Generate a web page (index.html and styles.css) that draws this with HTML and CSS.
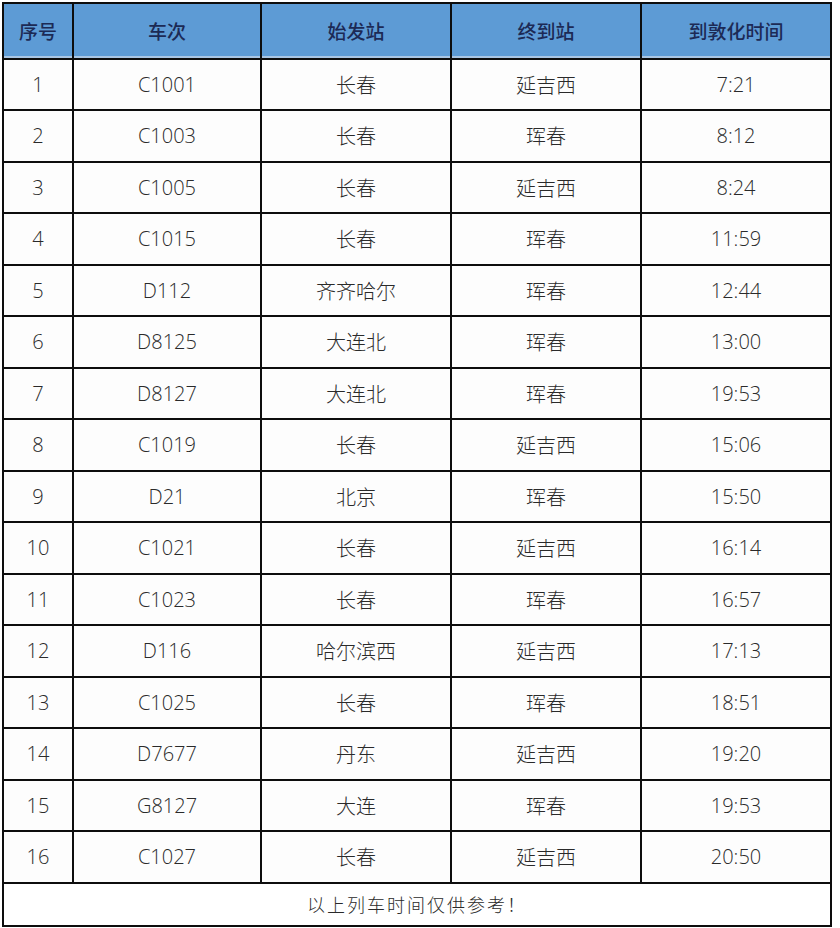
FILE: index.html
```html
<!DOCTYPE html>
<html lang="zh-CN">
<head>
<meta charset="utf-8">
<title>列车时刻表</title>
<link rel="stylesheet" href="styles.css">
</head>
<body>
<div class="page">
<table class="timetable">
  <colgroup>
    <col class="c-no">
    <col class="c-train">
    <col class="c-from">
    <col class="c-to">
    <col class="c-time">
  </colgroup>
  <thead>
    <tr><th>序号</th><th>车次</th><th>始发站</th><th>终到站</th><th>到敦化时间</th></tr>
  </thead>
  <tbody>
    <tr><td>1</td><td>C1001</td><td>长春</td><td>延吉西</td><td>7:21</td></tr>
    <tr><td>2</td><td>C1003</td><td>长春</td><td>珲春</td><td>8:12</td></tr>
    <tr><td>3</td><td>C1005</td><td>长春</td><td>延吉西</td><td>8:24</td></tr>
    <tr><td>4</td><td>C1015</td><td>长春</td><td>珲春</td><td>11:59</td></tr>
    <tr><td>5</td><td>D112</td><td>齐齐哈尔</td><td>珲春</td><td>12:44</td></tr>
    <tr><td>6</td><td>D8125</td><td>大连北</td><td>珲春</td><td>13:00</td></tr>
    <tr><td>7</td><td>D8127</td><td>大连北</td><td>珲春</td><td>19:53</td></tr>
    <tr><td>8</td><td>C1019</td><td>长春</td><td>延吉西</td><td>15:06</td></tr>
    <tr><td>9</td><td>D21</td><td>北京</td><td>珲春</td><td>15:50</td></tr>
    <tr><td>10</td><td>C1021</td><td>长春</td><td>延吉西</td><td>16:14</td></tr>
    <tr><td>11</td><td>C1023</td><td>长春</td><td>珲春</td><td>16:57</td></tr>
    <tr><td>12</td><td>D116</td><td>哈尔滨西</td><td>延吉西</td><td>17:13</td></tr>
    <tr><td>13</td><td>C1025</td><td>长春</td><td>珲春</td><td>18:51</td></tr>
    <tr><td>14</td><td>D7677</td><td>丹东</td><td>延吉西</td><td>19:20</td></tr>
    <tr><td>15</td><td>G8127</td><td>大连</td><td>珲春</td><td>19:53</td></tr>
    <tr><td>16</td><td>C1027</td><td>长春</td><td>延吉西</td><td>20:50</td></tr>
  </tbody>
  <tfoot>
    <tr><td colspan="5">以上列车时间仅供参考！</td></tr>
  </tfoot>
</table>
</div>
</body>
</html>
```
FILE: styles.css
```css
html, body {
  margin: 0;
  padding: 0;
  background: #ffffff;
}

.page {
  padding: 2px 0 0 2px;
}

.timetable {
  border-collapse: collapse;
  table-layout: fixed;
  width: 830px;
  font-family: "Open Sans", "Noto Sans CJK SC", sans-serif;
  font-size: 20px;
  font-weight: 300;
  color: #2a2a2a;
}

.c-no { width: 70px; }
.c-train { width: 188px; }
.c-from { width: 190px; }
.c-to { width: 190px; }
.c-time { width: 190px; }

.timetable th,
.timetable td {
  border: 2px solid #0d0d0d;
  text-align: center;
  vertical-align: middle;
  padding: 0;
}

.timetable thead th {
  height: 53.5px;
  background: #5d9bd5;
  color: #1c2a55;
  font-family: "Noto Sans CJK SC", sans-serif;
  font-weight: 500;
  font-size: 19px;
  box-shadow: inset 0 -2px 0 #a9c6e4;
}

.timetable tbody td {
  height: 49.5px;
  background: #fdfdfd;
}

.timetable tfoot td {
  height: 41px;
  font-family: "Noto Sans CJK SC", sans-serif;
  font-size: 18px;
  font-weight: 300;
  letter-spacing: 2px;
  color: #2a2a2a;
}
```
